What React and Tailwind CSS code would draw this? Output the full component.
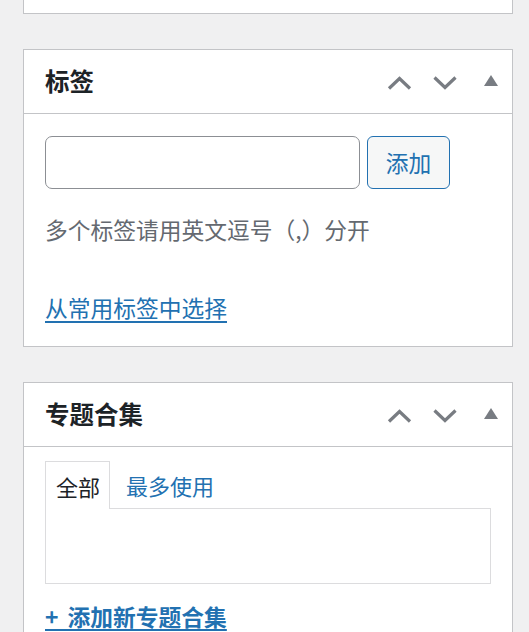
import React from "react";

const font = { fontFamily: '"Noto Sans CJK SC", "Noto Sans", sans-serif' };

function UpIcon() {
  return (
    <svg width="25" height="14" viewBox="0 0 25 14" className="block">
      <path d="M2 12.5 L12.5 2.5 L23 12.5" fill="none" stroke="#787c82" strokeWidth="3.2" />
    </svg>
  );
}

function DownIcon() {
  return (
    <svg width="24" height="14" viewBox="0 0 24 14" className="block">
      <path d="M1.5 1.5 L12 11.5 L22.5 1.5" fill="none" stroke="#787c82" strokeWidth="3.2" />
    </svg>
  );
}

function ToggleIcon() {
  return (
    <svg width="14" height="11" viewBox="0 0 14 11" className="block">
      <path d="M7 0 L14 11 L0 11 Z" fill="#787c82" />
    </svg>
  );
}

// Postbox header with the move/toggle handles
function PanelHeader({ title }) {
  return (
    <div className="flex h-[64px] items-center justify-between border-b border-[#c3c4c7] pl-[21px] pr-[14px]">
      <h2 className="text-[24.5px] font-bold leading-none text-[#1d2327]">{title}</h2>
      <div className="flex items-center">
        <button className="mt-[2px]">
          <UpIcon />
        </button>
        <button className="ml-[21px] mt-[2px]">
          <DownIcon />
        </button>
        <button className="ml-[27px] -mt-[3px]">
          <ToggleIcon />
        </button>
      </div>
    </div>
  );
}

export default function App() {
  return (
    <div className="min-h-[632px] w-[529px] overflow-hidden bg-[#f0f0f1] text-[22.75px] leading-[34px]" style={font}>
      {/* previous box, only its bottom edge shows */}
      <div className="ml-[23px] h-[14px] w-[490px] border-x border-b border-[#c3c4c7] bg-white" />

      {/* Tags box */}
      <div className="ml-[23px] mt-[35px] w-[490px] border border-[#c3c4c7] bg-white">
        <PanelHeader title="标签" />
        <div className="px-[21px] pb-[21px] pt-[22px]">
          <div className="flex items-center gap-[7px]">
            <input
              type="text"
              className="h-[53px] w-[315px] rounded-[7px] border border-[#8c8f94] bg-white px-3 outline-none"
            />
            <button className="h-[53px] w-[83px] rounded-[6px] border border-[#2271b1] bg-[#f6f7f7] text-[22.75px] text-[#2271b1]">
              添加
            </button>
          </div>
          <p className="mt-[24px] text-[#646970]">多个标签请用英文逗号（,）分开</p>
          <a href="#" className="mt-[44px] inline-block text-[#2271b1] underline decoration-[1.5px] underline-offset-[4px]">
            从常用标签中选择
          </a>
        </div>
      </div>

      {/* Topic collections box */}
      <div className="ml-[23px] mt-[35px] w-[490px] border border-[#c3c4c7] bg-white">
        <PanelHeader title="专题合集" />
        <div className="px-[21px] pb-[21px] pt-[14px]">
          <div className="flex items-end">
            <div className="relative z-10 -mb-px flex h-[48px] items-center border-x border-t border-[#dcdcde] bg-white pl-[10px] pr-[9px] text-[22px] text-[#1d2327]">
              全部
            </div>
            <a href="#" className="ml-[16px] flex h-[47px] items-center text-[22px] text-[#2271b1]">
              最多使用
            </a>
          </div>
          <div className="h-[76px] w-[446px] border border-[#dcdcde] bg-white" />
          <a
            href="#"
            className="mt-[16px] inline-block font-semibold text-[#2271b1] underline decoration-[2px] underline-offset-[3px] [word-spacing:4px]"
          >
            + 添加新专题合集
          </a>
        </div>
      </div>
    </div>
  );
}
